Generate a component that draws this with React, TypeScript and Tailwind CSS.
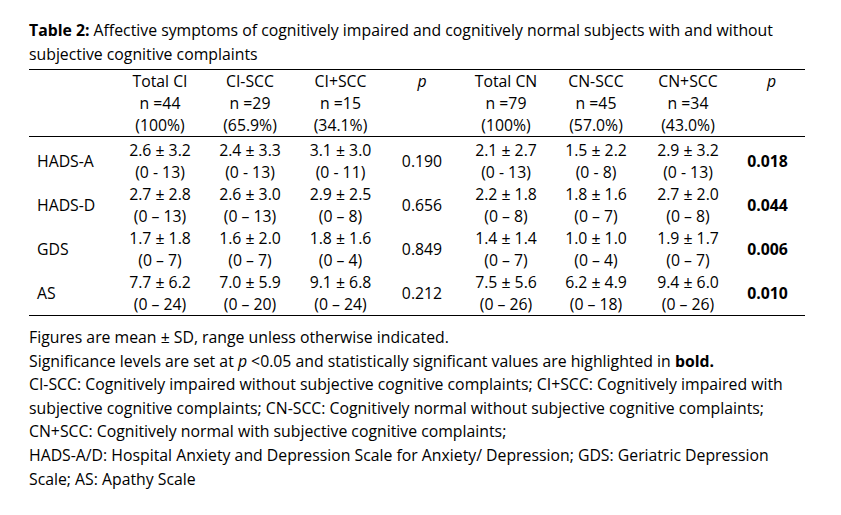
import React from "react";

type Row = {
  label: string;
  ci: [string, string][];
  p1: string;
  cn: [string, string][];
  p2: string;
};

const rows: Row[] = [
  {
    label: "HADS-A",
    ci: [
      ["2.6 ± 3.2", "(0 - 13)"],
      ["2.4 ± 3.3", "(0 - 13)"],
      ["3.1 ± 3.0", "(0 - 11)"],
    ],
    p1: "0.190",
    cn: [
      ["2.1 ± 2.7", "(0 - 13)"],
      ["1.5 ± 2.2", "(0 - 8)"],
      ["2.9 ± 3.2", "(0 - 13)"],
    ],
    p2: "0.018",
  },
  {
    label: "HADS-D",
    ci: [
      ["2.7 ± 2.8", "(0 – 13)"],
      ["2.6 ± 3.0", "(0 – 13)"],
      ["2.9 ± 2.5", "(0 – 8)"],
    ],
    p1: "0.656",
    cn: [
      ["2.2 ± 1.8", "(0 – 8)"],
      ["1.8 ± 1.6", "(0 – 7)"],
      ["2.7 ± 2.0", "(0 – 8)"],
    ],
    p2: "0.044",
  },
  {
    label: "GDS",
    ci: [
      ["1.7 ± 1.8", "(0 – 7)"],
      ["1.6 ± 2.0", "(0 – 7)"],
      ["1.8 ± 1.6", "(0 – 4)"],
    ],
    p1: "0.849",
    cn: [
      ["1.4 ± 1.4", "(0 – 7)"],
      ["1.0 ± 1.0", "(0 – 4)"],
      ["1.9 ± 1.7", "(0 – 7)"],
    ],
    p2: "0.006",
  },
  {
    label: "AS",
    ci: [
      ["7.7 ± 6.2", "(0 – 24)"],
      ["7.0 ± 5.9", "(0 – 20)"],
      ["9.1 ± 6.8", "(0 – 24)"],
    ],
    p1: "0.212",
    cn: [
      ["7.5 ± 5.6", "(0 – 26)"],
      ["6.2 ± 4.9", "(0 – 18)"],
      ["9.4 ± 6.0", "(0 – 26)"],
    ],
    p2: "0.010",
  },
];

const headers: [string, string, string][] = [
  ["Total CI", "n =44", "(100%)"],
  ["CI-SCC", "n =29", "(65.9%)"],
  ["CI+SCC", "n =15", "(34.1%)"],
];
const headers2: [string, string, string][] = [
  ["Total CN", "n =79", "(100%)"],
  ["CN-SCC", "n =45", "(57.0%)"],
  ["CN+SCC", "n =34", "(43.0%)"],
];

function HeadCell({ h }: { h: [string, string, string] }) {
  return (
    <th className="p-0 text-center align-top font-normal">
      <div>{h[0]}</div>
      <div>{h[1]}</div>
      <div>{h[2]}</div>
    </th>
  );
}

function DataCell({ d }: { d: [string, string] }) {
  return (
    <td className="p-0 text-center align-top whitespace-nowrap">
      <div>{d[0]}</div>
      <div>{d[1]}</div>
    </td>
  );
}

export default function App() {
  return (
    <div
      className="w-[841px] h-[515px] bg-white text-black text-[15.8px]"
      style={{ fontFamily: '"Open Sans", "Noto Sans", sans-serif' }}
    >
      <div className="pl-[29px] pt-[19px] w-[805px]">
        <div className="leading-[23.5px] whitespace-nowrap">
          <span className="font-bold">Table 2:</span> Affective symptoms of cognitively impaired and cognitively normal subjects with and without
          <br />
          subjective cognitive complaints
        </div>
        <table className="table-fixed border-collapse w-[776px] mt-[3px] leading-[22px]">
          <colgroup>
            <col className="w-[86px]" />
            <col className="w-[90px]" />
            <col className="w-[90px]" />
            <col className="w-[91px]" />
            <col className="w-[72px]" />
            <col className="w-[96px]" />
            <col className="w-[84px]" />
            <col className="w-[100px]" />
            <col className="w-[67px]" />
          </colgroup>
          <thead>
            <tr className="border-t border-b border-black h-[66px]">
              <th className="p-0" />
              {headers.map((h) => (
                <HeadCell key={h[0]} h={h} />
              ))}
              <th className="p-0 text-center align-top font-normal italic">p</th>
              {headers2.map((h) => (
                <HeadCell key={h[0]} h={h} />
              ))}
              <th className="p-0 text-center align-top font-normal italic">p</th>
            </tr>
          </thead>
          <tbody className="border-b border-black">
            {rows.map((r, i) => (
              <tr key={r.label} className={i === 0 ? "[&>td]:pt-[2px]" : ""}>
                <td className="p-0 pl-[8px] align-middle">{r.label}</td>
                {r.ci.map((d, j) => (
                  <DataCell key={j} d={d} />
                ))}
                <td className="p-0 text-center align-middle">{r.p1}</td>
                {r.cn.map((d, j) => (
                  <DataCell key={j} d={d} />
                ))}
                <td className="p-0 pr-[8px] text-center align-middle font-bold">{r.p2}</td>
              </tr>
            ))}
          </tbody>
        </table>
        <div className="mt-[10px] leading-[23.6px] whitespace-nowrap">
          <div>Figures are mean ± SD, range unless otherwise indicated.</div>
          <div>
            Significance levels are set at <i>p</i> &lt;0.05 and statistically significant values are highlighted in{" "}
            <b>bold.</b>
          </div>
          <div>
            CI-SCC: Cognitively impaired without subjective cognitive complaints; CI+SCC: Cognitively impaired with
          </div>
          <div>
            subjective cognitive complaints; CN-SCC: Cognitively normal without subjective cognitive complaints;
          </div>
          <div>CN+SCC: Cognitively normal with subjective cognitive complaints;</div>
          <div>
            HADS-A/D: Hospital Anxiety and Depression Scale for Anxiety/ Depression; GDS: Geriatric Depression
          </div>
          <div>Scale; AS: Apathy Scale</div>
        </div>
      </div>
    </div>
  );
}
